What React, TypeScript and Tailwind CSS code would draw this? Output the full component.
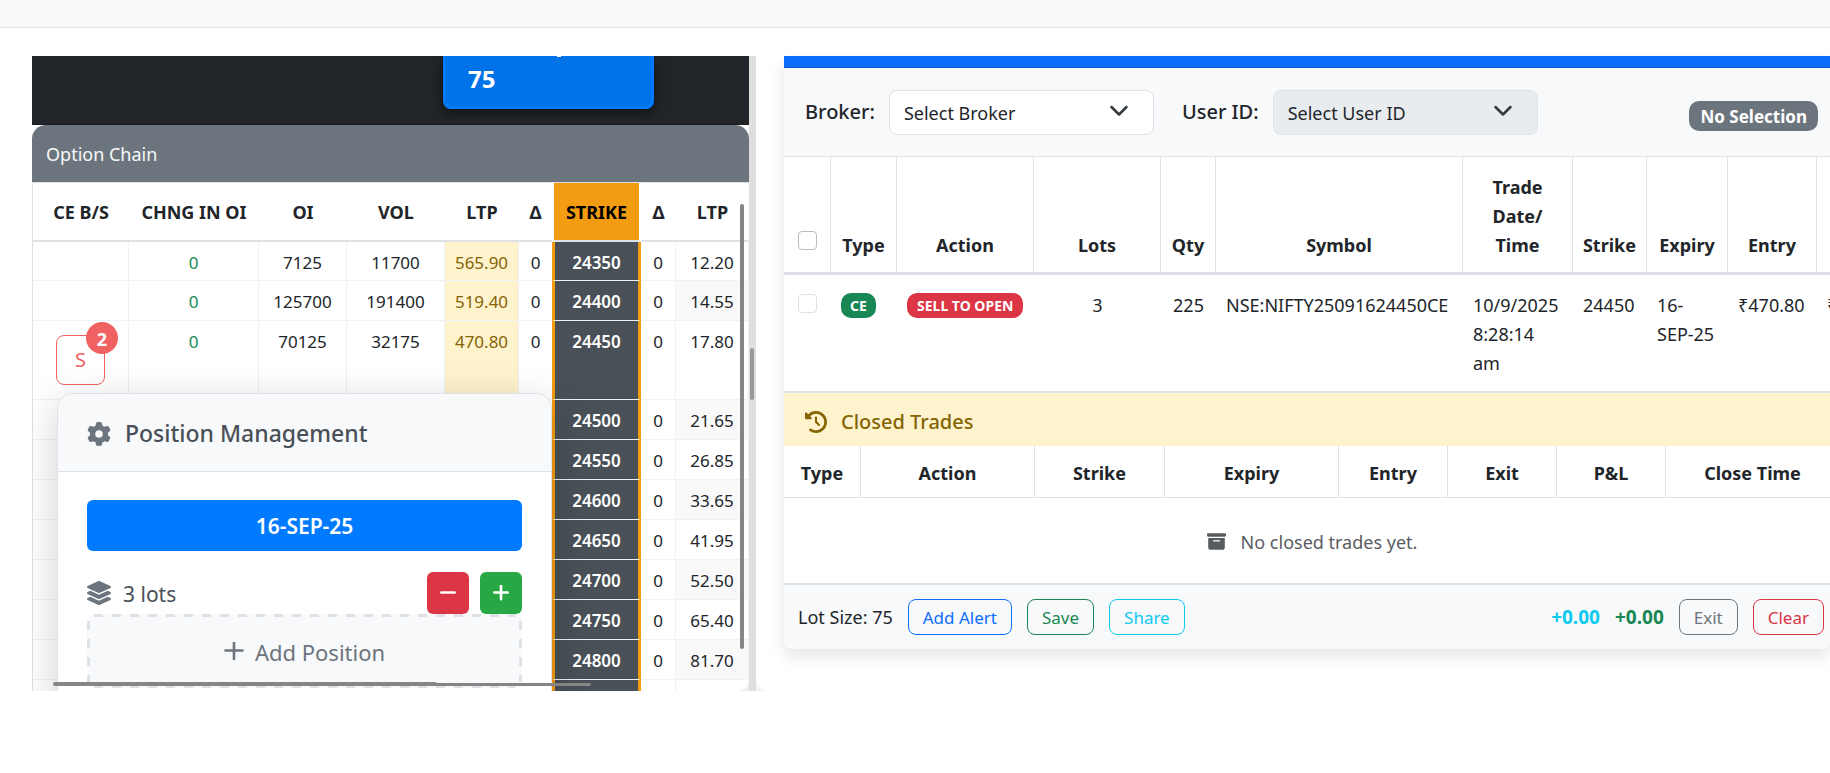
import React from "react";
import { FaLayerGroup } from "react-icons/fa";
import { FaGear, FaClockRotateLeft, FaBoxArchive } from "react-icons/fa6";

type Row = {
  oi?: string;
  vol?: string;
  ltp?: string;
  strike: string;
  putLtp: string;
  open?: boolean;
};

const rows: Row[] = [
  { oi: "7125", vol: "11700", ltp: "565.90", strike: "24350", putLtp: "12.20" },
  { oi: "125700", vol: "191400", ltp: "519.40", strike: "24400", putLtp: "14.55" },
  { oi: "70125", vol: "32175", ltp: "470.80", strike: "24450", putLtp: "17.80", open: true },
  { strike: "24500", putLtp: "21.65" },
  { strike: "24550", putLtp: "26.85" },
  { strike: "24600", putLtp: "33.65" },
  { strike: "24650", putLtp: "41.95" },
  { strike: "24700", putLtp: "52.50" },
  { strike: "24750", putLtp: "65.40" },
  { strike: "24800", putLtp: "81.70" },
  { strike: "", putLtp: "" },
];

const cell = "border-b border-r border-[#f0f1f3] pt-[7px] pb-1 text-center align-top";

function ChainRow({ row, first, even }: { row: Row; first: boolean; even: boolean }) {
  const delta = row.strike ? "0" : "";
  return (
    <tr className={row.open ? "h-[79px]" : first ? "h-[39px]" : "h-10"}>
      <td className={`${cell} border-l border-l-[#dee2e6]`}>
        {row.open && (
          <button className="relative mt-[7px] h-[50px] w-[49px] rounded-lg border border-[#f06262] text-xl text-[#f06262]">
            S
            <span className="absolute -right-[14px] -top-[14px] flex size-8 items-center justify-center rounded-full bg-[#f06262] pt-0.5 text-lg font-bold text-white">
              2
            </span>
          </button>
        )}
      </td>
      <td className={`${cell} text-[#198754]`}>{row.oi && "0"}</td>
      <td className={cell}>{row.oi}</td>
      <td className={cell}>{row.vol}</td>
      <td className={`${cell} bg-[#fff3cd] text-[#856404]`}>{row.ltp}</td>
      <td className={`${cell} border-r-0`}>{row.ltp && "0"}</td>
      <td className="border-x-3 border-b border-x-[#f39c12] border-b-[#f0f1f3] bg-[#495057] pt-[7px] pb-1 text-center align-top font-semibold text-white">
        {row.strike}
      </td>
      <td className={cell}>{delta}</td>
      <td className={even ? `${cell} bg-[#f9f9f9]` : cell}>{row.putLtp}</td>
    </tr>
  );
}

function PositionPopup() {
  return (
    <section className="absolute left-[25px] top-[337px] w-[495px] rounded-2xl border border-[#dee2e6] bg-white pb-8 shadow-[0_10px_40px_rgba(0,0,0,0.18)]">
      <header className="flex h-[78px] items-center gap-3.5 rounded-t-2xl border-b border-[#dee2e6] bg-[#f8f9fa] px-[29px] pt-0.5">
        <FaGear className="size-6 text-[#6c757d]" />
        <h2 className="text-[23px] font-medium text-[#495057]">Position Management</h2>
      </header>
      <div className="px-[29px] pt-7">
        <button className="h-[51px] w-full rounded-md bg-[#007bff] pt-0.5 text-[21px] font-semibold text-white">
          16-SEP-25
        </button>
        <div className="mt-[21px] flex items-center">
          <FaLayerGroup className="mr-3 size-6 text-[#6c757d]" />
          <span className="flex-1 pt-0.5 text-[21px] text-[#495057]">3 lots</span>
          <button aria-label="Remove lot" className="flex size-[42px] items-center justify-center rounded-md bg-[#dc3545]">
            <svg width="16" height="16" viewBox="0 0 16 16" aria-hidden="true">
              <path d="M1.3 7.5h13.4" stroke="#fff" strokeWidth="2.6" strokeLinecap="round" />
            </svg>
          </button>
          <button aria-label="Add lot" className="ml-[11px] flex size-[42px] items-center justify-center rounded-md bg-[#28a745]">
            <svg width="16" height="16" viewBox="0 0 16 16" aria-hidden="true">
              <path d="M1.3 7.5h13.4M8 0.8v13.4" stroke="#fff" strokeWidth="2.6" strokeLinecap="round" />
            </svg>
          </button>
        </div>
        <button className="relative flex h-[74px] w-full items-center justify-center gap-[11px] rounded-lg bg-[#f8f9fa] pt-0.5 text-[22px] text-[#6c757d]">
          <svg className="absolute inset-0 size-full" aria-hidden="true">
            <g stroke="#dee2e6" strokeWidth="3" strokeDasharray="9 9">
              <line x1="7" y1="1.5" x2="98.5%" y2="1.5" />
              <line x1="7" y1="72.5" x2="98.5%" y2="72.5" />
              <line x1="1.5" y1="7" x2="1.5" y2="68" />
            </g>
          </svg>
          <span className="absolute inset-y-0 right-0 w-[3px] overflow-hidden">
            <svg className="h-full w-[3px]" aria-hidden="true">
              <line x1="1.5" y1="7" x2="1.5" y2="68" stroke="#dee2e6" strokeWidth="3" strokeDasharray="9 9" />
            </svg>
          </span>
          <svg width="20" height="20" viewBox="0 0 20 20" aria-hidden="true">
            <path d="M1.5 8.5h17M10 0.5v16.5" stroke="#6c757d" strokeWidth="2.6" strokeLinecap="round" />
          </svg>
          Add Position
        </button>
      </div>
    </section>
  );
}

function OptionPanel() {
  const head = "border-b-2 border-t border-[#dee2e6] text-center text-lg font-bold";
  return (
    <div className="flex h-[635px]">
      <div className="relative min-w-0 flex-1 overflow-hidden">
        <div className="flex h-[69px] justify-end border-b border-[#1a1d20] bg-[#212529] pr-[95px]">
          <div className="relative h-[53px] w-[211px] rounded-b-lg border-x-3 border-b-3 border-[#007bff] bg-[#0073e9] pl-[22px] pt-1.5 shadow-[0_4px_12px_rgba(0,0,0,0.5)]">
            <span className="absolute left-[111px] top-0 h-px w-1 bg-white" />
            <span className="text-2xl leading-[34px] font-bold text-white">75</span>
          </div>
        </div>
        <h1 className="flex h-[57px] items-center rounded-t-[14px] bg-[#6c757d] px-3.5 text-lg text-[#f8f9fa]">
          Option Chain
        </h1>
        <table className="w-full table-fixed border-separate border-spacing-0">
          <colgroup>
            <col className="w-[97px]" />
            <col className="w-[130px]" />
            <col className="w-[88px]" />
            <col className="w-[98px]" />
            <col className="w-[74px]" />
            <col className="w-[33px]" />
            <col className="w-[89px]" />
            <col className="w-[35px]" />
            <col className="w-[73px]" />
          </colgroup>
          <thead>
            <tr className="h-[60px]">
              <th className={`${head} border-l`}>CE B/S</th>
              <th className={head}>CHNG IN OI</th>
              <th className={head}>OI</th>
              <th className={head}>VOL</th>
              <th className={head}>LTP</th>
              <th className={head}>Δ</th>
              <th className="border-x-2 border-b-2 border-t border-x-white border-y-[#dee2e6] bg-[#f39c12] text-center text-lg font-bold text-black">
                STRIKE
              </th>
              <th className={head}>Δ</th>
              <th className={head}>LTP</th>
            </tr>
          </thead>
          <tbody>
            {rows.map((row, i) => (
              <ChainRow key={i} row={row} first={i === 0} even={i % 2 === 1} />
            ))}
          </tbody>
        </table>
        <PositionPopup />
        <div className="absolute bottom-0 right-0">
          <svg width="10" height="9" viewBox="0 0 10 9" aria-hidden="true">
            <path d="M10 0V9H0C5 8 8 5 10 0Z" fill="#efefef" />
          </svg>
        </div>
        <div className="absolute bottom-[5px] left-[21px] h-1 w-[384px] rounded-full bg-[#858585]" />
        <div className="absolute bottom-[5px] left-[400px] h-[3px] w-[159px] rounded-full bg-[#858585]" />
        <div className="absolute bottom-[42px] right-[5px] top-[148px] w-1 rounded-full bg-[#858585]" />
      </div>
      <div className="relative w-[7px] bg-[#dfdfdf] pl-px pt-[292px]">
        <div className="h-[52px] w-1 rounded-full bg-[#999]" />
        <svg className="absolute bottom-0 left-full" width="10" height="9" viewBox="0 0 10 9" aria-hidden="true">
          <path d="M0 0V9H10C5 8 2 5 0 0Z" fill="#f4f4f4" />
        </svg>
      </div>
    </div>
  );
}

function Picker({ id, label, option, disabled }: { id: string; label: string; option: string; disabled?: boolean }) {
  return (
    <div className="flex items-center gap-3.5">
      <label htmlFor={id} className="text-xl font-medium">
        {label}
      </label>
      <div className="relative">
        <select
          id={id}
          disabled={disabled}
          className="h-[45px] w-[265px] appearance-none rounded-lg border border-[#dee2e6] bg-white px-3.5 pt-0.5 text-lg text-[#212529] opacity-100 disabled:bg-[#e9ecef]"
        >
          <option>{option}</option>
        </select>
        <svg
          className="pointer-events-none absolute right-[25px] top-3"
          width="20"
          height="20"
          viewBox="0 0 16 16"
          fill="none"
          aria-hidden="true"
        >
          <path d="m2 4 6 6 6-6" stroke="#343a40" strokeWidth="2" strokeLinecap="round" strokeLinejoin="round" />
        </svg>
      </div>
    </div>
  );
}

function TradesTable() {
  const head = "border-b-3 border-r border-[#dee2e6] px-2 pb-3 text-center align-bottom font-bold leading-[29px]";
  const data = "pt-4 px-2.5 align-top leading-[29px]";
  const box = "size-[19px] appearance-none rounded border bg-white";
  return (
    <table className="w-full table-fixed border-separate border-spacing-0 text-lg">
      <colgroup>
        <col className="w-[47px]" />
        <col className="w-[66px]" />
        <col className="w-[137px]" />
        <col className="w-[127px]" />
        <col className="w-[55px]" />
        <col className="w-[247px]" />
        <col className="w-[110px]" />
        <col className="w-[74px]" />
        <col className="w-[81px]" />
        <col className="w-[89px]" />
        <col className="w-[89px]" />
      </colgroup>
      <thead>
        <tr className="h-[118px]">
          <th className="border-b-3 border-r border-[#dee2e6] pb-3.5 text-center align-bottom leading-[29px]">
            <input type="checkbox" aria-label="Select all trades" className={`${box} border-[#b9bcc2]`} />
          </th>
          <th className={head}>Type</th>
          <th className={head}>Action</th>
          <th className={head}>Lots</th>
          <th className={head}>Qty</th>
          <th className={head}>Symbol</th>
          <th className={head}>
            Trade
            <br />
            Date/
            <br />
            Time
          </th>
          <th className={head}>Strike</th>
          <th className={head}>Expiry</th>
          <th className={head}>Entry</th>
          <th className={head}></th>
        </tr>
      </thead>
      <tbody>
        <tr className="h-[116px]">
          <td className="px-3.5 pt-[17px] align-top">
            <input type="checkbox" disabled aria-label="Select trade" className={`${box} border-[#dee2e6]`} />
          </td>
          <td className="px-2.5 pt-[15px] align-top">
            <span className="inline-flex h-[25px] items-center rounded-[10px] bg-[#198754] px-[9px] text-[14px] font-bold text-white">
              CE
            </span>
          </td>
          <td className="px-2.5 pt-[15px] align-top">
            <span className="inline-flex h-[25px] items-center justify-center whitespace-nowrap rounded-[10px] bg-[#dc3545] px-2.5 text-[14px] font-bold text-white">
              SELL TO OPEN
            </span>
          </td>
          <td className={`${data} text-center`}>3</td>
          <td className={`${data} text-center`}>225</td>
          <td className={`${data} whitespace-nowrap`}>NSE:NIFTY25091624450CE</td>
          <td className={data}>
            10/9/2025
            <br />
            8:28:14
            <br />
            am
          </td>
          <td className={data}>24450</td>
          <td className={data}>
            16-
            <br />
            SEP-25
          </td>
          <td className={data}>₹470.80</td>
          <td className={data}>₹</td>
        </tr>
      </tbody>
    </table>
  );
}

function ClosedTrades() {
  const head = "border-b border-r border-[#dee2e6] pt-0.5 text-center text-lg font-bold";
  return (
    <section>
      <h2 className="flex h-[55px] items-center gap-3.5 border-t-2 border-[#dee2e6] bg-[#fff3cd] px-[21px] pt-1 text-xl font-medium text-[#856404]">
        <FaClockRotateLeft className="size-[22px]" />
        Closed Trades
      </h2>
      <table className="w-full table-fixed border-separate border-spacing-0">
        <colgroup>
          <col className="w-[77px]" />
          <col className="w-[174px]" />
          <col className="w-[130px]" />
          <col className="w-[174px]" />
          <col className="w-[109px]" />
          <col className="w-[109px]" />
          <col className="w-[109px]" />
          <col className="w-[174px]" />
        </colgroup>
        <thead>
          <tr className="h-[52px]">
            {["Type", "Action", "Strike", "Expiry", "Entry", "Exit", "P&L", "Close Time"].map((name) => (
              <th key={name} className={head}>
                {name}
              </th>
            ))}
          </tr>
        </thead>
        <tbody>
          <tr className="h-[85px]">
            <td colSpan={8}>
              <div className="flex items-center justify-center gap-[15px] pt-0.5 text-lg text-[#595c5f]">
                <FaBoxArchive className="size-[19px]" />
                No closed trades yet.
              </div>
            </td>
          </tr>
        </tbody>
      </table>
    </section>
  );
}

function TradePanel() {
  const button = "h-9 rounded-lg border px-3.5 text-[17px]";
  return (
    <div className="min-w-0 self-start rounded-b-lg shadow-[0_8px_16px_rgba(0,0,0,0.1)]">
      <div className="h-3 border-b border-[#0b5ed7] bg-[#0d6efd]" />
      <div className="flex h-[89px] items-center border-b border-[#dee2e6] bg-[#f8f9fa] pl-[21px] pr-3">
        <div className="flex flex-1 gap-7">
          <Picker id="broker" label="Broker:" option="Select Broker" />
          <Picker id="user" label="User ID:" option="Select User ID" disabled />
        </div>
        <span className="mt-2 flex h-[30px] items-center rounded-[10px] bg-[#6c757d] px-[11px] text-[17px] font-bold text-white">
          No Selection
        </span>
      </div>
      <div className="overflow-hidden bg-white">
        <TradesTable />
        <ClosedTrades />
      </div>
      <footer className="flex h-[66px] items-center justify-between rounded-b-lg border-t-2 border-[#dee2e6] bg-[#f8f9fa] pl-3.5 pr-1.5">
        <div className="flex items-center gap-[15px]">
          <span className="text-lg">Lot Size: 75</span>
          <button className={`${button} border-[#0d6efd] text-[#0d6efd]`}>Add Alert</button>
          <button className={`${button} border-[#198754] text-[#198754]`}>Save</button>
          <button className={`${button} border-[#0dcaf0] text-[#0dcaf0]`}>Share</button>
        </div>
        <div className="flex items-center gap-[15px]">
          <span className="text-[19px] font-bold text-[#0dcaf0]">+0.00</span>
          <span className="text-[19px] font-bold text-[#198754]">+0.00</span>
          <button className={`${button} border-[#6c757d] text-[#6c757d]`}>Exit</button>
          <button className={`${button} border-[#dc3545] text-[#dc3545]`}>Clear</button>
        </div>
      </footer>
    </div>
  );
}

export default function App() {
  return (
    <div className="min-h-screen overflow-hidden bg-white font-['Noto_Sans','Open_Sans',sans-serif] text-[17px] leading-[27px] text-[#212529]">
      <div className="h-7 border-b border-[#dee2e6] bg-[#f8f9fb]" />
      <main className="grid grid-cols-[724fr_1046fr] gap-7 pl-8 pt-7">
        <OptionPanel />
        <TradePanel />
      </main>
    </div>
  );
}
